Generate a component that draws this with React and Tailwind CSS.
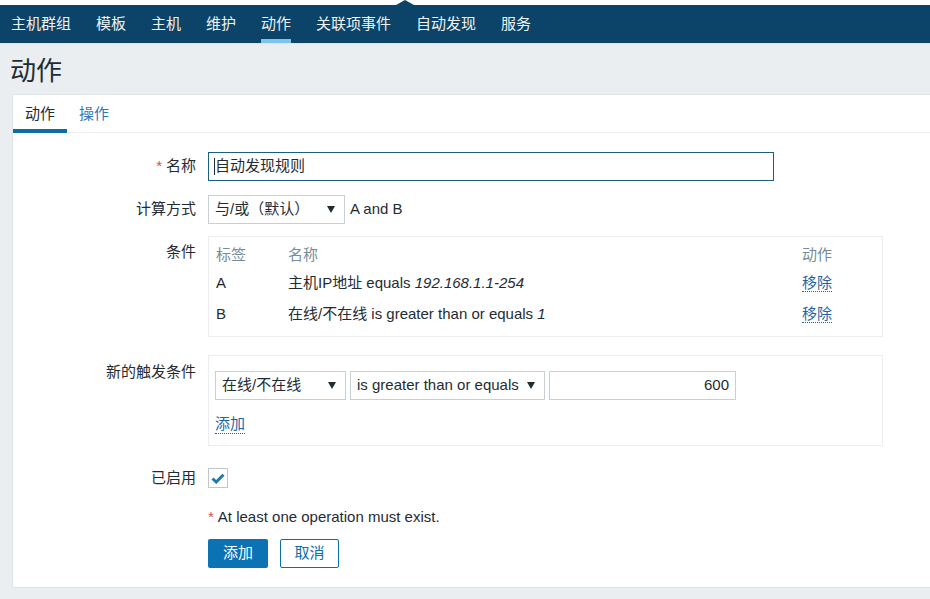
import React from "react";

const FONT = { fontFamily: '"Liberation Sans", "Noto Sans CJK SC", Arial, sans-serif' };

function Arrow() {
  return (
    <svg width="8" height="7" viewBox="0 0 8 7" className="shrink-0">
      <path d="M0 0 L8 0 L4 7 Z" fill="#1f2c33" />
    </svg>
  );
}

function Select({ children, w }) {
  return (
    <div
      className={`flex items-center justify-between h-[29px] border border-[#c9d0d4] bg-white pl-[6px] pr-[9px] text-[15px] text-[#1f2c33] ${w}`}
    >
      <span className="whitespace-nowrap">{children}</span>
      <Arrow />
    </div>
  );
}

function Link({ children }) {
  return (
    <span className="text-[#1f65a6] border-b border-dotted border-[#1f65a6] leading-[19px]">{children}</span>
  );
}

export default function App() {
  const nav = ["主机群组", "模板", "主机", "维护", "动作", "关联项事件", "自动发现", "服务"];
  return (
    <div style={FONT} className="w-[930px] h-[599px] overflow-hidden bg-[#ebeef0] text-[#1f2c33]">
      <div className="h-[5px] bg-white relative">
        <svg className="absolute left-[396px] top-0" width="18" height="5" viewBox="0 0 18 5">
          <path d="M0 5 L9 0 L18 5 Z" fill="#0b4468" />
        </svg>
      </div>
      <div className="h-[38px] bg-[#0b4468] flex items-stretch pl-[11px] gap-[25px]">
        {nav.map((n) => (
          <div key={n} className="relative flex items-center text-[15px] text-[#f0f3f5]">
            <span>{n}</span>
            {n === "动作" && (
              <div className="absolute left-0 right-0 bottom-0 h-[4px] bg-[#7ec3ec]" />
            )}
          </div>
        ))}
      </div>
      <div className="h-[1px] bg-[#dfe4e7]" />
      <div className="h-[50px] flex items-center pl-[10px] pt-[3px]">
        <h1 className="text-[26px] text-[#1f2c33] leading-none">动作</h1>
      </div>
      <div className="ml-[12px] bg-white border-t border-l border-b border-[#dfe4e7] h-[494px]">
        <div className="flex h-[38px] border-b border-[#ebeef0]">
          <div className="relative px-[12px] flex items-center text-[15px] text-[#1f2c33] pt-[1px]">
            动作
            <div className="absolute left-0 right-0 bottom-[-1px] h-[4px] bg-[#0b6ea8]" />
          </div>
          <div className="px-[12px] flex items-center text-[15px] text-[#2e78b4] pt-[1px]">操作</div>
        </div>

        <div className="pt-[19px] text-[15px]">
          {/* name */}
          <div className="flex items-center h-[29px]">
            <div className="w-[183px] text-right">
              <span className="text-[#d64e4e] mr-[4px]">*</span>名称
            </div>
            <div className="ml-[12px] w-[566px] h-[29px] border border-[#1b5f80] flex items-center pl-[5px]">
              <span className="w-[1px] h-[17px] bg-[#1f2c33]" />
              自动发现规则
            </div>
          </div>

          {/* calc */}
          <div className="flex items-center h-[29px] mt-[14px]">
            <div className="w-[183px] text-right">计算方式</div>
            <div className="ml-[12px] flex items-center gap-[5px]">
              <Select w="w-[137px]">与/或（默认）</Select>
              <span>A and B</span>
            </div>
          </div>

          {/* conditions */}
          <div className="flex mt-[12px]">
            <div className="w-[183px] text-right pt-[5px]">条件</div>
            <div className="ml-[12px] w-[675px] h-[101px] border border-[#ebeef0] pl-[7px] pt-[5px]">
              <div className="grid grid-cols-[72px_514px_80px] h-[26px] items-center text-[#768d99]">
                <span>标签</span>
                <span>名称</span>
                <span>动作</span>
              </div>
              <div className="grid grid-cols-[72px_514px_80px] h-[30px] items-center">
                <span>A</span>
                <span>
                  主机IP地址 equals <i>192.168.1.1-254</i>
                </span>
                <span>
                  <Link>移除</Link>
                </span>
              </div>
              <div className="grid grid-cols-[72px_514px_80px] h-[33px] items-center">
                <span>B</span>
                <span>
                  在线/不在线 is greater than or equals <i>1</i>
                </span>
                <span>
                  <Link>移除</Link>
                </span>
              </div>
            </div>
          </div>

          {/* new condition */}
          <div className="flex mt-[18px]">
            <div className="w-[183px] text-right pt-[6px]">新的触发条件</div>
            <div className="ml-[12px] w-[675px] h-[91px] border border-[#ebeef0] pl-[6px] pt-[15px]">
              <div className="flex items-center gap-[4px]">
                <Select w="w-[131px]">在线/不在线</Select>
                <Select w="w-[195px]">is greater than or equals</Select>
                <div className="w-[187px] h-[29px] border border-[#c9d0d4] flex items-center justify-end pr-[6px]">
                  600
                </div>
              </div>
              <div className="mt-[12px] h-[24px] flex items-center">
                <Link>添加</Link>
              </div>
            </div>
          </div>

          {/* enabled */}
          <div className="flex items-center h-[20px] mt-[22px]">
            <div className="w-[183px] text-right">已启用</div>
            <div className="ml-[12px] w-[20px] h-[20px] border border-[#bfc7cb] flex items-center justify-center">
              <svg width="14" height="11" viewBox="0 0 14 11">
                <path d="M1.5 5.5 L5.2 9 L12.5 1.8" fill="none" stroke="#1f78b4" strokeWidth="3" />
              </svg>
            </div>
          </div>

          {/* error */}
          <div className="flex items-center h-[18px] mt-[20px]">
            <div className="w-[183px]" />
            <div className="ml-[12px]">
              <span className="text-[#d64e4e] mr-[4px]">*</span>At least one operation must exist.
            </div>
          </div>

          {/* buttons */}
          <div className="flex mt-[13px]">
            <div className="w-[183px]" />
            <div className="ml-[12px] flex gap-[12px]">
              <div className="w-[60px] h-[29px] rounded-[2px] bg-[#0b73b4] text-white flex items-center justify-center text-[15px]">
                添加
              </div>
              <div className="w-[59px] h-[29px] rounded-[2px] border border-[#0b6ea8] text-[#0b6ea8] flex items-center justify-center text-[15px]">
                取消
              </div>
            </div>
          </div>
        </div>
      </div>
    </div>
  );
}
